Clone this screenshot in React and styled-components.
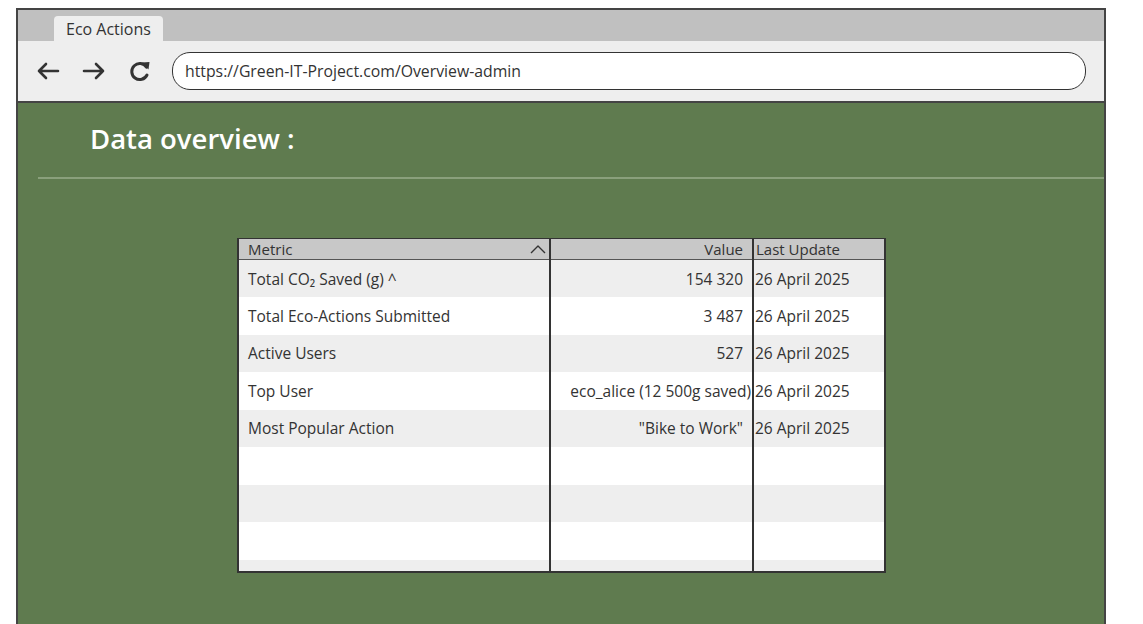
import React from "react";
import styled, { createGlobalStyle } from "styled-components";

const GlobalStyle = createGlobalStyle`
  html, body {
    margin: 0;
    padding: 0;
    background: #ffffff;
    overflow: hidden;
  }
  body {
    font-family: "Open Sans", "Liberation Sans", Arial, sans-serif;
    color: #333333;
  }
`;

const Window = styled.div`
  margin: 8px 0 0 16px;
  width: 1090px;
  height: 640px;
  border: 2px solid #444444;
  border-bottom: none;
  box-sizing: border-box;
  display: flex;
  flex-direction: column;
`;

const TabBar = styled.div`
  height: 31px;
  background: #c0c0c0;
  display: flex;
  align-items: flex-end;
  padding-left: 36px;
`;

const Tab = styled.div`
  background: #eeeeee;
  height: 25px;
  padding: 0 12px;
  border-radius: 4px 4px 0 0;
  display: flex;
  align-items: center;
  font-size: 16px;
  color: #333333;
`;

const NavBar = styled.div`
  height: 60px;
  background: #eeeeee;
  border-bottom: 2px solid #444444;
  display: flex;
  align-items: center;
  padding: 0 18px;
`;

const NavButton = styled.div`
  width: 24px;
  height: 24px;
  margin-right: ${(p) => p.gap || 22}px;
  display: flex;
  align-items: center;
  justify-content: center;
`;

const UrlField = styled.div`
  flex: 1;
  height: 36px;
  margin-left: 2px;
  background: #ffffff;
  border: 1.5px solid #333333;
  border-radius: 18px;
  display: flex;
  align-items: center;
  padding-left: 12px;
  font-size: 15.8px;
  color: #333333;
`;

const Content = styled.div`
  flex: 1;
  background: #5f7b4f;
  padding-top: 20px;
`;

const Heading = styled.h1`
  margin: 0 0 0 72px;
  font-family: "Open Sans", sans-serif;
  font-size: 27.5px;
  line-height: 32px;
  font-weight: 600;
  color: #ffffff;
`;

const Rule = styled.div`
  margin: 22px 0 0 20px;
  height: 2px;
  background: #8aa07c;
`;

const TableWrap = styled.div`
  margin: 59px 0 0 219px;
  width: 647px;
`;

const Table = styled.table`
  border-collapse: collapse;
  width: 647px;
  table-layout: fixed;
  border: 2px solid #333333;
  border-top: 1.5px solid #333333;
  font-size: 15.5px;
`;

const HeadCell = styled.th`
  background: #c8c8c8;
  height: 20px;
  padding: 0 ${(p) => (p.align === "right" ? "9px" : "3px")} 0
    ${(p) => (p.first ? "9px" : "2px")};
  font-weight: 400;
  font-size: 15px;
  line-height: 20px;
  color: #333333;
  text-align: ${(p) => p.align || "left"};
  border-right: 2px solid #333333;
  border-bottom: 1px solid #555555;
  white-space: nowrap;
`;

const HeadInner = styled.div`
  display: flex;
  align-items: center;
  justify-content: space-between;
`;

const Row = styled.tr`
  background: ${(p) => (p.shade ? "#eeeeee" : "#ffffff")};
  height: ${(p) => p.h || 37.5}px;
`;

const Cell = styled.td`
  padding: 0 ${(p) => (p.align === "right" ? p.right ?? 9 : 3)}px 0
    ${(p) => (p.first ? 9 : 1)}px;
  text-align: ${(p) => p.align || "left"};
  border-right: 2px solid #333333;
  white-space: nowrap;
  overflow: hidden;
  color: #333333;
`;

const Arrow = ({ dir }) => (
  <svg width="24" height="20" viewBox="0 0 24 20" fill="none">
    {dir === "left" ? (
      <path
        d="M22 10 H3 M10 3 L3 10 L10 17"
        stroke="#333"
        strokeWidth="2.6"
        strokeLinecap="round"
        strokeLinejoin="round"
      />
    ) : (
      <path
        d="M2 10 H21 M14 3 L21 10 L14 17"
        stroke="#333"
        strokeWidth="2.6"
        strokeLinecap="round"
        strokeLinejoin="round"
      />
    )}
  </svg>
);

const Reload = () => (
  <svg width="24" height="24" viewBox="0 0 24 24" fill="none">
    <path
      d="M18.5 8.2 A8 8 0 1 0 19 16"
      stroke="#333"
      strokeWidth="3"
      strokeLinecap="round"
    />
    <path d="M14 3.5 L21.5 3 L20.5 10.5 Z" fill="#333" />
  </svg>
);

const Chevron = () => (
  <svg width="16" height="10" viewBox="0 0 16 10" fill="none">
    <path
      d="M1 9 L8 2 L15 9"
      stroke="#333"
      strokeWidth="1.4"
      strokeLinejoin="round"
    />
  </svg>
);

const rows = [
  { metric: "Total CO₂ Saved (g) ^", value: "154 320", date: "26 April 2025" },
  { metric: "Total Eco-Actions Submitted", value: "3 487", date: "26 April 2025" },
  { metric: "Active Users", value: "527", date: "26 April 2025" },
  {
    metric: "Top User",
    value: "eco_alice (12 500g saved)",
    date: "26 April 2025",
    tight: true,
  },
  { metric: "Most Popular Action", value: "\"Bike to Work\"", date: "26 April 2025" },
  { metric: "", value: "", date: "" },
  { metric: "", value: "", date: "" },
  { metric: "", value: "", date: "" },
];

const App = () => {
  return (
    <>
      <GlobalStyle />
      <Window>
        <TabBar>
          <Tab>Eco Actions</Tab>
        </TabBar>
        <NavBar>
          <NavButton gap={22}>
            <Arrow dir="left" />
          </NavButton>
          <NavButton gap={22}>
            <Arrow dir="right" />
          </NavButton>
          <NavButton gap={18}>
            <Reload />
          </NavButton>
          <UrlField>https://Green-IT-Project.com/Overview-admin</UrlField>
        </NavBar>
        <Content>
          <Heading>Data overview :</Heading>
          <Rule />
          <TableWrap>
            <Table>
              <colgroup>
                <col style={{ width: 312 }} />
                <col style={{ width: 203 }} />
                <col style={{ width: 132 }} />
              </colgroup>
              <thead>
                <tr>
                  <HeadCell first>
                    <HeadInner>
                      <span>Metric</span>
                      <Chevron />
                    </HeadInner>
                  </HeadCell>
                  <HeadCell align="right">Value</HeadCell>
                  <HeadCell>Last Update</HeadCell>
                </tr>
              </thead>
              <tbody>
                {rows.map((r, i) => (
                  <Row key={i} shade={i % 2 === 0}>
                    <Cell first>{r.metric}</Cell>
                    <Cell align="right" right={r.tight ? 1 : 9}>
                      {r.value}
                    </Cell>
                    <Cell>{r.date}</Cell>
                  </Row>
                ))}
                <Row shade h={12}>
                  <Cell first />
                  <Cell />
                  <Cell />
                </Row>
              </tbody>
            </Table>
          </TableWrap>
        </Content>
      </Window>
    </>
  );
};

export default App;
